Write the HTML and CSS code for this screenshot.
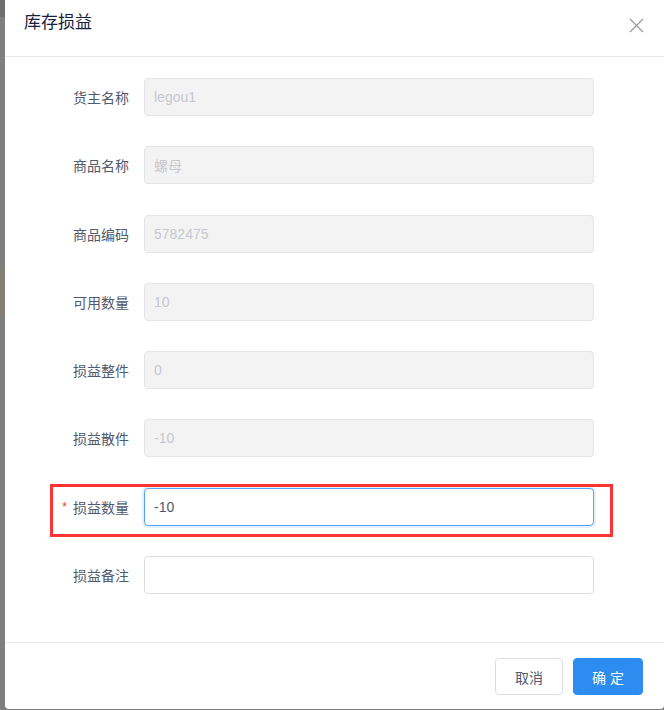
FILE: index.html
```html
<!DOCTYPE html>
<html lang="zh-CN">
<head>
    <meta charset="UTF-8">
    <meta name="viewport" content="width=device-width, initial-scale=1.0">
    <title>库存损益</title>
    <link rel="stylesheet" href="styles.css">
</head>
<body>

    <!-- Modal: 库存损益 -->
    <div class="modal">
        <div class="modal-header">
            <span class="modal-title">库存损益</span>
            <a class="modal-close" href="#">
                <svg width="15" height="15" viewBox="0 0 15 15">
                    <path d="M1 1 L14 14 M14 1 L1 14" stroke="#999" stroke-width="1.2" fill="none"/>
                </svg>
            </a>
        </div>

        <div class="modal-body">
            <form class="form">
                <div class="form-item">
                    <label class="form-label">货主名称</label>
                    <input class="input" type="text" value="legou1" disabled>
                </div>
                <div class="form-item">
                    <label class="form-label">商品名称</label>
                    <input class="input" type="text" value="螺母" disabled>
                </div>
                <div class="form-item">
                    <label class="form-label">商品编码</label>
                    <input class="input" type="text" value="5782475" disabled>
                </div>
                <div class="form-item">
                    <label class="form-label">可用数量</label>
                    <input class="input" type="text" value="10" disabled>
                </div>
                <div class="form-item">
                    <label class="form-label">损益整件</label>
                    <input class="input" type="text" value="0" disabled>
                </div>
                <div class="form-item">
                    <label class="form-label">损益散件</label>
                    <input class="input" type="text" value="-10" disabled>
                </div>
                <div class="form-item highlighted">
                    <label class="form-label required">损益数量</label>
                    <input class="input focused" type="text" value="-10">
                    <!-- red annotation box -->
                    <div class="mark-box"></div>
                </div>
                <div class="form-item">
                    <label class="form-label">损益备注</label>
                    <input class="input" type="text" value="">
                </div>
            </form>
        </div>

        <div class="modal-footer">
            <button class="btn" type="button">取消</button>
            <button class="btn btn-primary" type="button">确 定</button>
        </div>
    </div>

</body>
</html>
```

FILE: styles.css
```css
html, body {
    height: 100%;
}
body {
    margin: 0;
    font-family: "Liberation Sans", "Noto Sans CJK SC", sans-serif;
    font-size: 14px;
    color: #515a6e;
    overflow: hidden;
    /* dimmed page behind the modal */
    background: linear-gradient(to bottom,
        #6e6e6e 0, #6e6e6e 17px,
        #7f7f7f 17px, #7f7f7f 270px,
        #857f76 270px, #857f76 317px,
        #7f7f7f 317px);
}
.modal {
    margin-left: 5px;
    width: 659px;
    height: 709px;
    background-color: #fff;
    border-radius: 0 0 4px 4px;
    display: flex;
    flex-direction: column;
    position: relative;
}
.modal-header {
    height: 57px;
    box-sizing: border-box;
    padding: 12px 19px 0;
    border-bottom: 1px solid #e8eaec;
}
.modal-title {
    font-size: 17px;
    line-height: 22px;
    color: #17233d;
}
.modal-close {
    position: absolute;
    top: 18px;
    right: 20px;
    width: 15px;
    height: 15px;
    display: block;
}
.modal-close svg {
    display: block;
}
.modal-body {
    flex: 1;
    padding-top: 21px;
}
.form {
    display: flex;
    flex-direction: column;
    gap: 30.3px;
    margin: 0;
}
.form-item {
    display: flex;
    align-items: center;
    position: relative;
}
.form-label {
    width: 139px;
    box-sizing: border-box;
    padding-right: 15px;
    text-align: right;
    font-size: 14px;
    color: #515a6e;
}
.form-label.required::before {
    content: "*";
    color: #ed4014;
    margin-right: 6px;
    font-size: 12px;
    vertical-align: 2px;
}
.input {
    width: 450px;
    height: 38px;
    box-sizing: border-box;
    padding: 0 9px;
    border: 1px solid #dcdee2;
    border-radius: 4px;
    font-family: "Liberation Sans", "Noto Sans CJK SC", sans-serif;
    font-size: 14px;
    color: #515a6e;
    background-color: #fff;
    outline: none;
}
.input:disabled {
    background-color: #f3f3f3;
    border-color: #e3e5e8;
    color: #c5c8ce;
    -webkit-text-fill-color: #c5c8ce;
    opacity: 1;
}
.input.focused {
    border-color: #57a3f3;
    box-shadow: 0 0 0 2px rgba(45, 140, 240, 0.12);
}
.mark-box {
    position: absolute;
    left: 45px;
    right: 51px;
    top: -4px;
    bottom: -11px;
    border: 3px solid #ff3333;
    pointer-events: none;
}
.modal-footer {
    border-top: 1px solid #e8eaec;
    padding: 15px 21px 14px;
    display: flex;
    justify-content: flex-end;
    gap: 10px;
}
.btn {
    height: 37px;
    padding: 0 19px;
    border: 1px solid #dcdee2;
    border-radius: 4px;
    background-color: #fff;
    color: #515a6e;
    font-family: "Liberation Sans", "Noto Sans CJK SC", sans-serif;
    font-size: 14px;
    cursor: pointer;
}
.btn-primary {
    background-color: #2d8cf0;
    border-color: #2d8cf0;
    color: #fff;
    padding: 0 18px;
}
```
